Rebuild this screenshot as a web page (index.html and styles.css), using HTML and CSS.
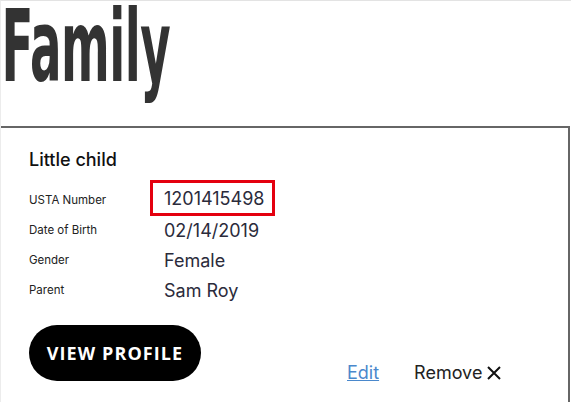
FILE: index.html
```html
<!DOCTYPE html>
<html>
<head>
<meta charset="utf-8">
<link rel="stylesheet" href="styles.css">
</head>
<body>
<div class="page">
  <div class="title-wrap"><h1 class="title">Family</h1></div>
  <div class="card">
    <div class="name">Little child</div>
    <div class="rows">
      <div class="label">USTA Number</div>
      <div class="value boxed-cell"><span class="boxed">1201415498</span></div>
      <div class="label">Date of Birth</div>
      <div class="value">02/14/2019</div>
      <div class="label">Gender</div>
      <div class="value">Female</div>
      <div class="label">Parent</div>
      <div class="value">Sam Roy</div>
    </div>
    <div class="footer">
      <button class="btn">VIEW PROFILE</button>
      <div class="actions">
        <a class="edit" href="#">Edit</a>
        <span class="remove">Remove
          <svg width="16" height="16" viewBox="0 0 16 16"><path d="M2 2 L14 14 M14 2 L2 14" stroke="#111" stroke-width="2" fill="none"/></svg>
        </span>
      </div>
    </div>
  </div>
</div>
</body>
</html>
```
FILE: styles.css
```css
html, body { margin: 0; padding: 0; background: #fff; }
body { font-family: "Inter", "Roboto", sans-serif; color: #222; }
.page {
  border-top: 1px solid #e3e3e3;
  border-left: 1px solid #ececec;
  height: 402px;
  overflow: hidden;
  box-sizing: border-box;
}
.title-wrap { height: 125px; }
.title {
  margin: 0;
  padding: 0 0 0 1px;
  width: max-content;
  font-family: "Liberation Sans Narrow", "DejaVu Sans Condensed", sans-serif;
  font-weight: bold;
  font-size: 100px;
  line-height: 92px;
  color: #333;
  transform: scaleX(0.52);
  transform-origin: left top;
  letter-spacing: -1px;
}
.card {
  margin-left: -12px;
  width: 581px;
  box-sizing: border-box;
  border: 2px solid #666;
  padding: 20px 0 0 38px;
  height: 300px;
}
.name { font-size: 18px; line-height: 23px; color: #111; font-weight: 500; }
.rows {
  display: grid;
  grid-template-columns: 135px auto;
  grid-auto-rows: 30px;
  align-items: center;
  margin-top: 14px;
}
.label { font-size: 11.5px; color: #222; }
.value { font-size: 18px; color: #2b2b3b; }
.boxed-cell { margin-top: -4px; }
.boxed {
  display: inline-block;
  border: 3px solid #e4000f;
  padding: 5px 8px 4px 11px;
  margin-left: -14px;
  line-height: 21px;
}
.footer { display: flex; align-items: flex-end; margin-top: 20px; }
.btn {
  width: 172px; height: 56px;
  border: none; border-radius: 28px;
  background: #000; color: #fff;
  font-family: "Open Sans", sans-serif;
  font-weight: bold; font-size: 18px; letter-spacing: 1.1px;
}
.actions { display: flex; align-items: center; margin-left: 146px; margin-bottom: -2px; font-size: 18px; }
.edit { color: #4a88cc; text-decoration: underline; }
.remove { margin-left: 35px; display: inline-flex; align-items: center; gap: 4px; color: #222; }
```
